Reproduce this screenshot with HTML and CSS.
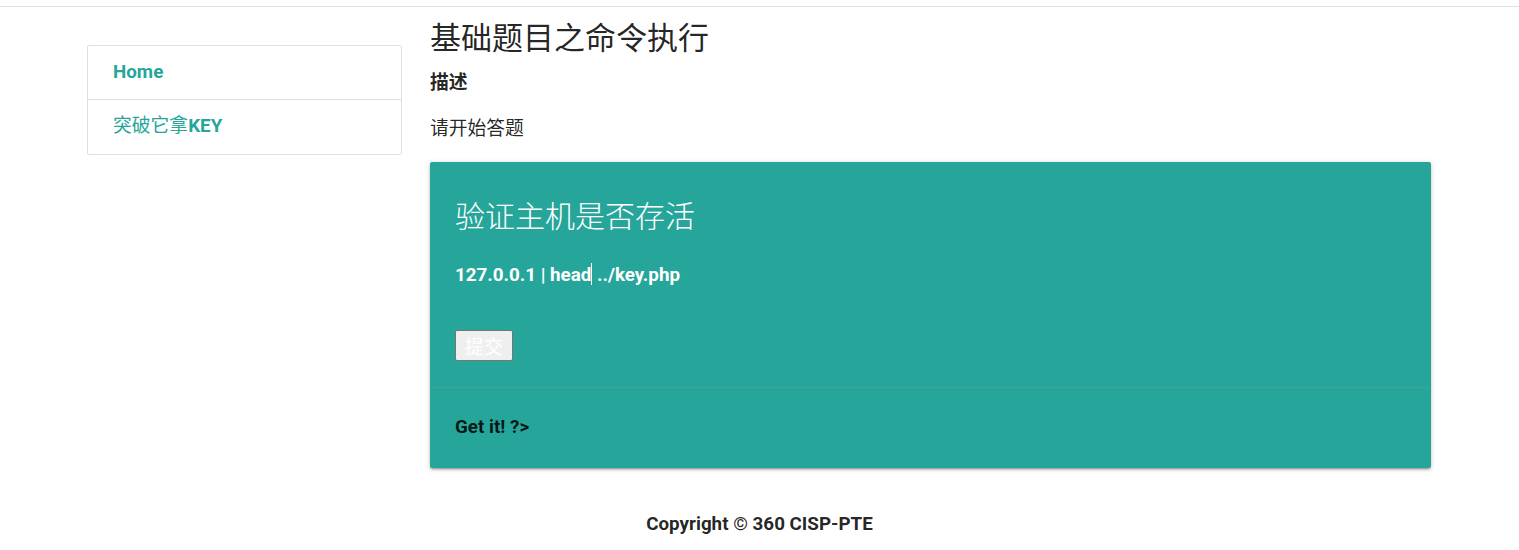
FILE: index.html
```html
<!DOCTYPE html>
<html lang="zh-CN">
<head>
<meta charset="utf-8">
<title>基础题目之命令执行</title>
<link rel="stylesheet" href="styles.css">
</head>
<body>
<div class="topbar"></div>
<div class="layout">
  <aside class="sidebar">
    <ul class="collection">
      <li class="collection-item"><a class="home" href="#">Home</a></li>
      <li class="collection-item"><a href="#">突破它拿<b>KEY</b></a></li>
    </ul>
  </aside>
  <main class="main">
    <h1 class="page-title">基础题目之命令执行</h1>
    <h2 class="desc-label">描述</h2>
    <p class="desc">请开始答题</p>
    <div class="card">
      <div class="card-content">
        <div class="card-title">验证主机是否存活</div>
        <p class="cmd">127.0.0.1 | head<span class="caret"></span> ../key.php</p>
        <button class="submit" type="button">提交</button>
      </div>
      <div class="card-action">Get it! ?&gt;</div>
    </div>
  </main>
</div>
<footer class="footer">Copyright © 360 CISP-PTE</footer>
</body>
</html>
```

FILE: styles.css
```css
* { box-sizing: border-box; }
html, body { margin: 0; padding: 0; background: #fff; }
body {
  font-family: Roboto, "Noto Sans CJK SC", sans-serif;
  color: rgba(0,0,0,0.87);
  font-size: 18.8px;
}
.topbar {
  height: 7px;
  border-bottom: 1px solid #e0e0e0;
}
.layout {
  display: flex;
  align-items: flex-start;
  padding-left: 87px;
  gap: 28px;
}
.sidebar { width: 315px; padding-top: 38px; }
.collection {
  list-style: none;
  margin: 0;
  padding: 0;
  border: 1px solid #e0e0e0;
  border-radius: 2px;
}
.collection-item {
  height: 53px;
  display: flex;
  align-items: center;
  padding-left: 25px;
  font-size: 18.8px;
  line-height: 22px;
}
.collection-item + .collection-item { border-top: 1px solid #e0e0e0; height: 55px; }
.collection-item a { color: #26a69a; text-decoration: none; line-height: 22px; display: block; }
.collection-item + .collection-item a { margin-top: -3px; }
.collection-item a.home { font-weight: 700; margin-top: -1px; }
.collection-item b { font-weight: 700; }
.main { width: 1001px; }
.page-title {
  margin: 14px 0 0;
  font-size: 31px;
  line-height: 36px;
  font-weight: 400;
}
.desc-label {
  margin: 14px 0 0;
  font-size: 18.8px;
  line-height: 24px;
  font-weight: 700;
}
.desc {
  margin: 22px 0 0;
  font-size: 18.8px;
  line-height: 24px;
}
.card {
  margin-top: 21px;
  background: #26a69a;
  border-radius: 2px;
  box-shadow: 0 2px 2px 0 rgba(0,0,0,0.14), 0 3px 1px -2px rgba(0,0,0,0.12), 0 1px 5px 0 rgba(0,0,0,0.2);
}
.card-content { padding: 35px 25px 26px; }
.card-title {
  color: #fff;
  font-size: 30px;
  line-height: 40px;
  font-weight: 300;
}
.cmd {
  margin: 25px 0 0;
  color: #fff;
  font-weight: 700;
  font-size: 18.8px;
  line-height: 27px;
}
.caret {
  display: inline-block;
  width: 1px;
  height: 22px;
  background: #fff;
  vertical-align: -4px;
}
.submit {
  display: block;
  margin-top: 41px;
  width: 58px;
  height: 31px;
  padding: 0;
  background: #efefef;
  border: 1px solid #767676;
  border-radius: 2px;
  color: #fff;
  font-family: "Noto Sans CJK SC", sans-serif;
  font-size: 19px;
  line-height: 29px;
}
.card-action {
  border-top: 1px solid rgba(160,160,160,0.2);
  padding: 27px 25px 29px;
  font-weight: 700;
  font-size: 18.8px;
  line-height: 24px;
  color: rgba(0,0,0,0.87);
}
.footer {
  margin-top: 44px;
  text-align: center;
  font-weight: 700;
  font-size: 18.8px;
  line-height: 24px;
}
```
